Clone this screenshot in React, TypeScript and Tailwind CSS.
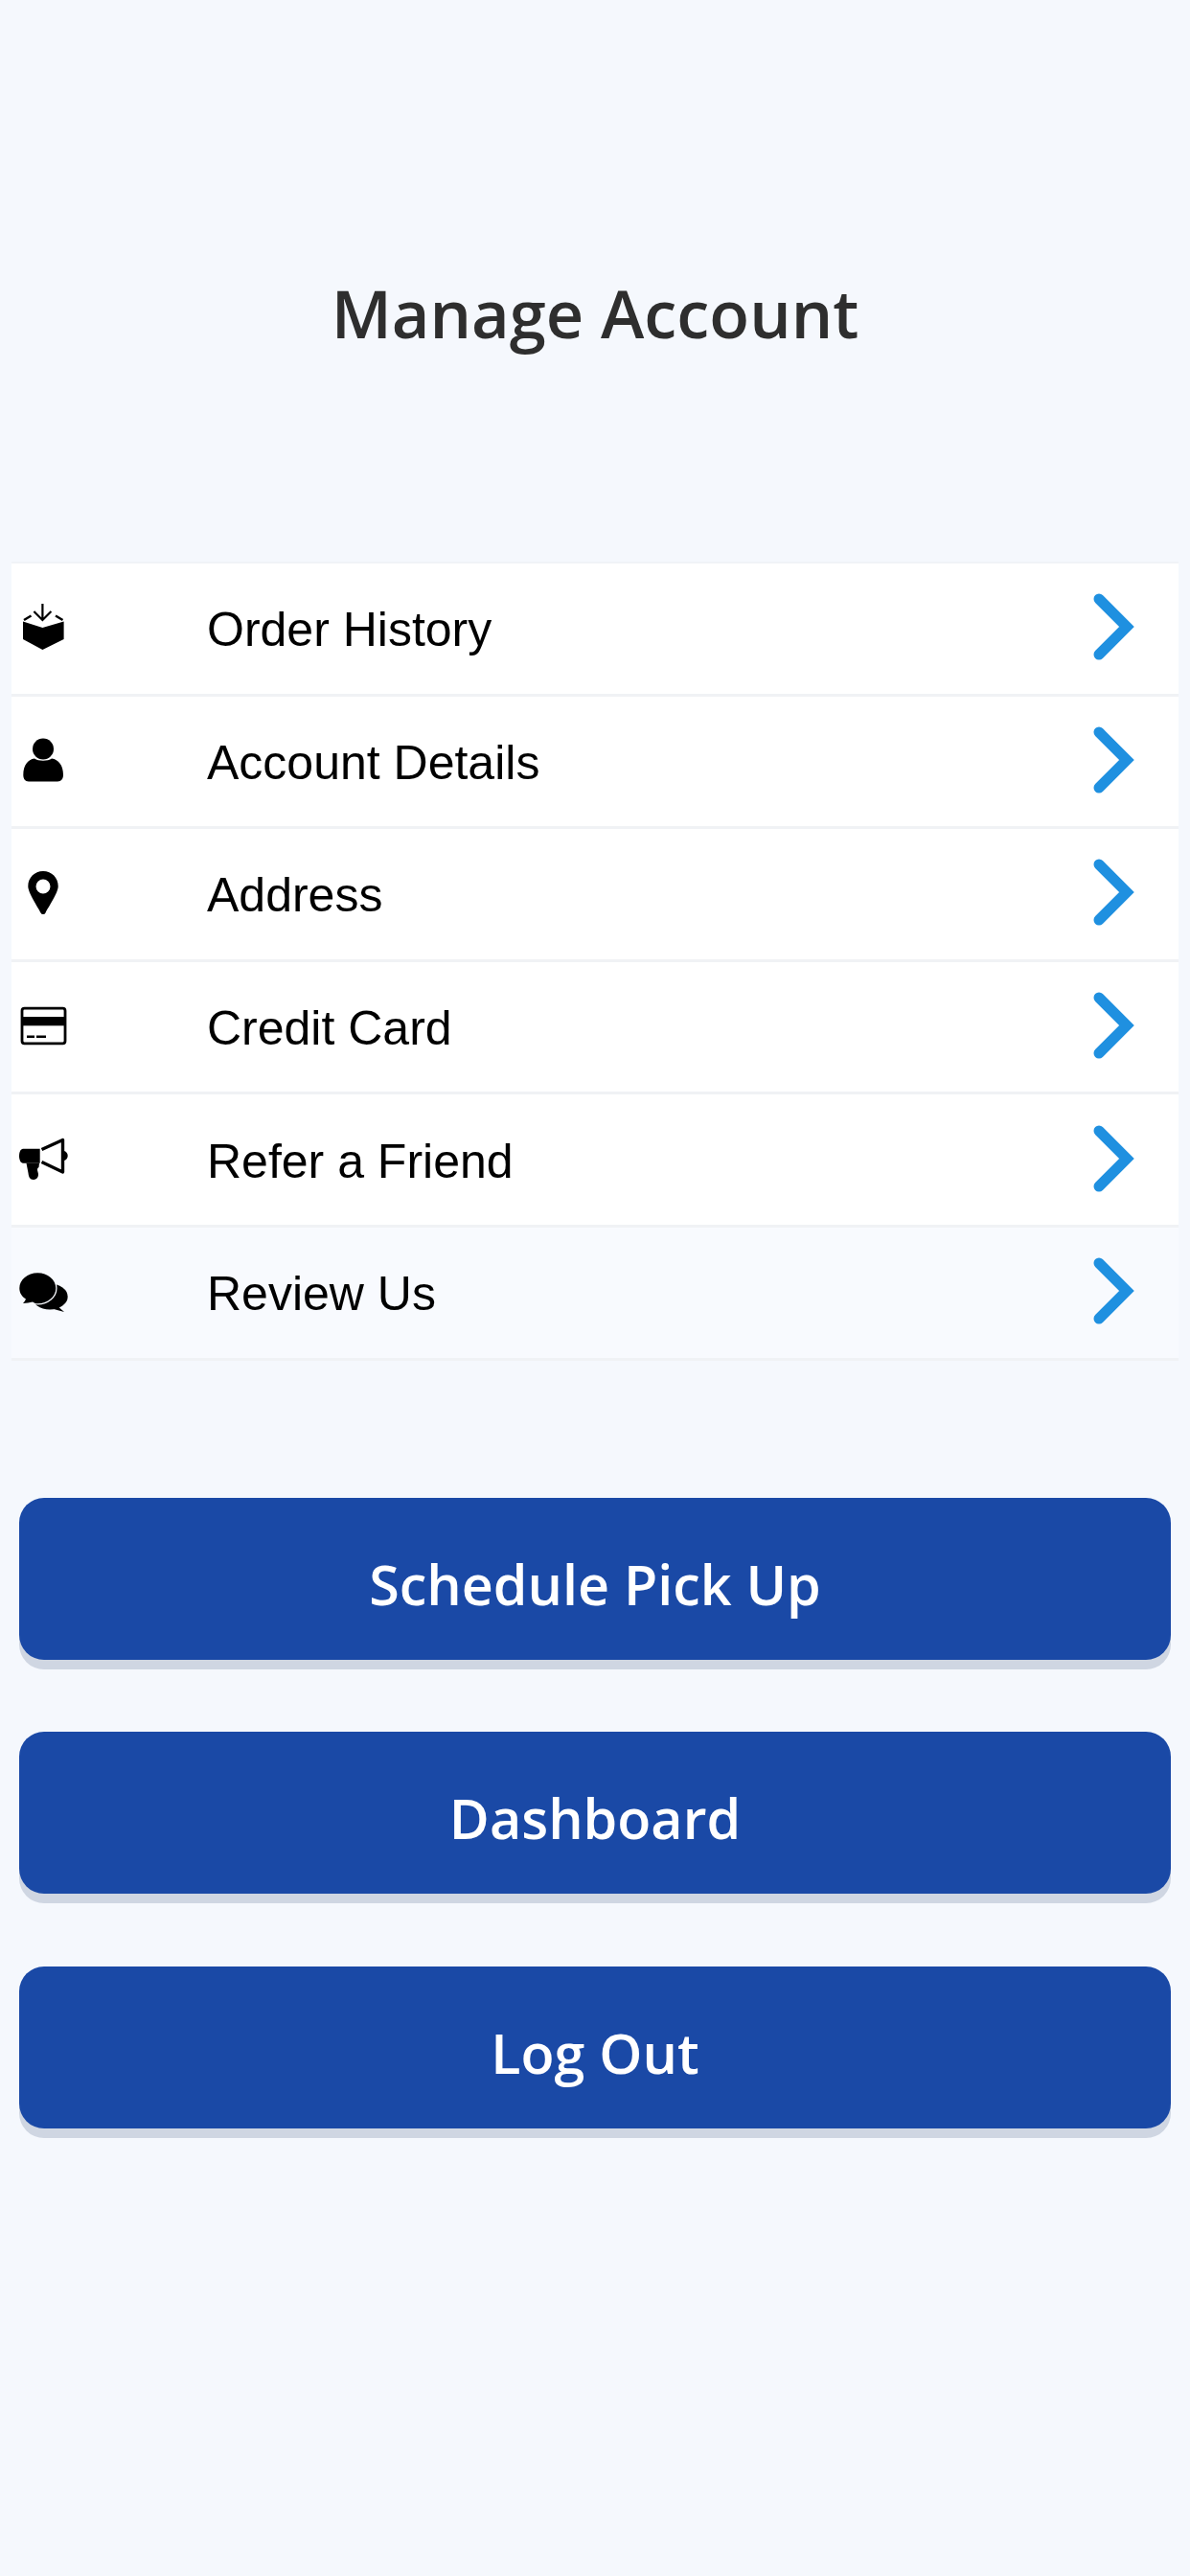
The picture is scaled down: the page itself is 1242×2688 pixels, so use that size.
const rowIcons = {
  box: (
    <>
      <path d="M29.4 4V21M20.4 12L29.4 21L38.4 12" fill="none" stroke="#000" strokeWidth="2.2" />
      <path d="M9 22.5L29.4 29L51.6 22.5V41L29.4 52L9 41Z" fill="#000" />
      <path d="M10 21L17.5 16.5M50.5 21L43 16.5" fill="none" stroke="#000" strokeWidth="2.4" />
    </>
  ),
  person: (
    <>
      <circle cx="30" cy="17.5" r="11" fill="#000" />
      <path d="M9.3 44.5C9.3 34.5 14 28.5 21 27.5C25 30.5 35 30.5 39 27.5C46 28.5 51 34.5 51 44.5C51 48.5 49 51.5 45 51.5H15C11 51.5 9.3 48.5 9.3 44.5Z" fill="#000" />
    </>
  ),
  pin: (
    <path
      fillRule="evenodd"
      d="M30 6C21 6 14.3 13 14.3 21.7C14.3 29 25 44 27.5 49.5C28.5 51.5 31.5 51.5 32.5 49.5C35 44 45.7 29 45.7 21.7C45.7 13 39 6 30 6ZM30 14.5A7.5 7.5 0 1 1 30 29.5A7.5 7.5 0 1 1 30 14.5Z"
      fill="#000"
    />
  ),
  card: (
    <>
      <rect x="8" y="10.2" width="45" height="36.6" rx="2.5" fill="none" stroke="#000" strokeWidth="2.8" />
      <rect x="8" y="19" width="45" height="9.3" fill="#000" />
      <path d="M13 39.7H21M23 39.7H33" fill="none" stroke="#000" strokeWidth="2.4" />
    </>
  ),
  megaphone: (
    <>
      <path d="M9 18.7H26.7V33.7H9C6.5 33.7 5 30 5 26.2C5 22.4 6.5 18.7 9 18.7Z" fill="#000" />
      <path d="M12.5 33.7H26L25.5 38C24 39 23.5 40 24.5 43C26 47 24 51 20 51C16 51 15 48 14.5 44Z" fill="#000" />
      <path d="M28.5 19.5L50.5 9.5V43L28.5 32.5" fill="none" stroke="#000" strokeWidth="3.4" strokeLinejoin="round" />
      <path d="M52 21C54.5 21.5 55.7 24 55.7 26C55.7 28 54.5 30.5 52 31Z" fill="#000" />
    </>
  ),
  chat: (
    <>
      <ellipse cx="37" cy="34" rx="18.7" ry="13.5" fill="#000" />
      <path d="M44 43L52 50L41 47Z" fill="#000" />
      <path
        d="M24.3 9.3C13.8 9.3 5.3 16.5 5.3 25.3C5.3 30.5 8 34 12 36.5C11.5 38 10.5 39.5 9 41C12.5 41 16 40 19 39.5C21 40.8 22.5 41.3 24.3 41.3C34.8 41.3 43.3 34.1 43.3 25.3C43.3 16.5 34.8 9.3 24.3 9.3Z"
        fill="#000"
        stroke="#f8fafe"
        strokeWidth="2.5"
        paintOrder="stroke"
      />
    </>
  ),
};

const rows = [
  { label: "Order History", icon: rowIcons.box, bg: "bg-white" },
  { label: "Account Details", icon: rowIcons.person, bg: "bg-white" },
  { label: "Address", icon: rowIcons.pin, bg: "bg-white" },
  { label: "Credit Card", icon: rowIcons.card, bg: "bg-white" },
  { label: "Refer a Friend", icon: rowIcons.megaphone, bg: "bg-white" },
  { label: "Review Us", icon: rowIcons.chat, bg: "bg-[#f8fafe]" },
];

const actions = ["Schedule Pick Up", "Dashboard", "Log Out"];

const App = () => {
  return (
    <div className="min-h-[2688px] bg-[#f5f8fd] pt-[279px] font-['Open_Sans',sans-serif]">
      <h1 className="text-center text-[68.5px] leading-[96px] font-semibold text-[#2e2e2e]">
        Manage Account
      </h1>

      <ul className="mx-[12px] mt-[211px] border-t-2 border-[#f0f3f7] font-['Liberation_Sans',sans-serif]">
        {rows.map((row) => (
          <li
            key={row.label}
            className={`flex h-[138.6px] items-center border-b-[3px] border-[#f0f2f5] ${row.bg}`}
          >
            <span className="flex w-[204px] pl-[3px]">
              <svg width="60" height="60" viewBox="0 0 60 60">
                {row.icon}
              </svg>
            </span>
            <span className="flex-1 pt-[4px] text-[50px] text-black">{row.label}</span>
            <svg width="60" height="90" viewBox="0 0 60 90" className="mr-[37px] mb-[3px]">
              <path
                d="M14 16L43 45L14 74"
                fill="none"
                stroke="#1f90e0"
                strokeWidth="11"
                strokeLinecap="round"
                strokeLinejoin="miter"
              />
            </svg>
          </li>
        ))}
      </ul>

      <div className="mx-[20px] mt-[143px] flex flex-col gap-[75.5px]">
        {actions.map((label) => (
          <button
            key={label}
            className="h-[169px] rounded-[26px] bg-[#1a49a6] pt-[11px] text-[57.4px] font-semibold text-white shadow-[0_10px_0_#cfd6e2]"
          >
            {label}
          </button>
        ))}
      </div>
    </div>
  );
};

export default App;
